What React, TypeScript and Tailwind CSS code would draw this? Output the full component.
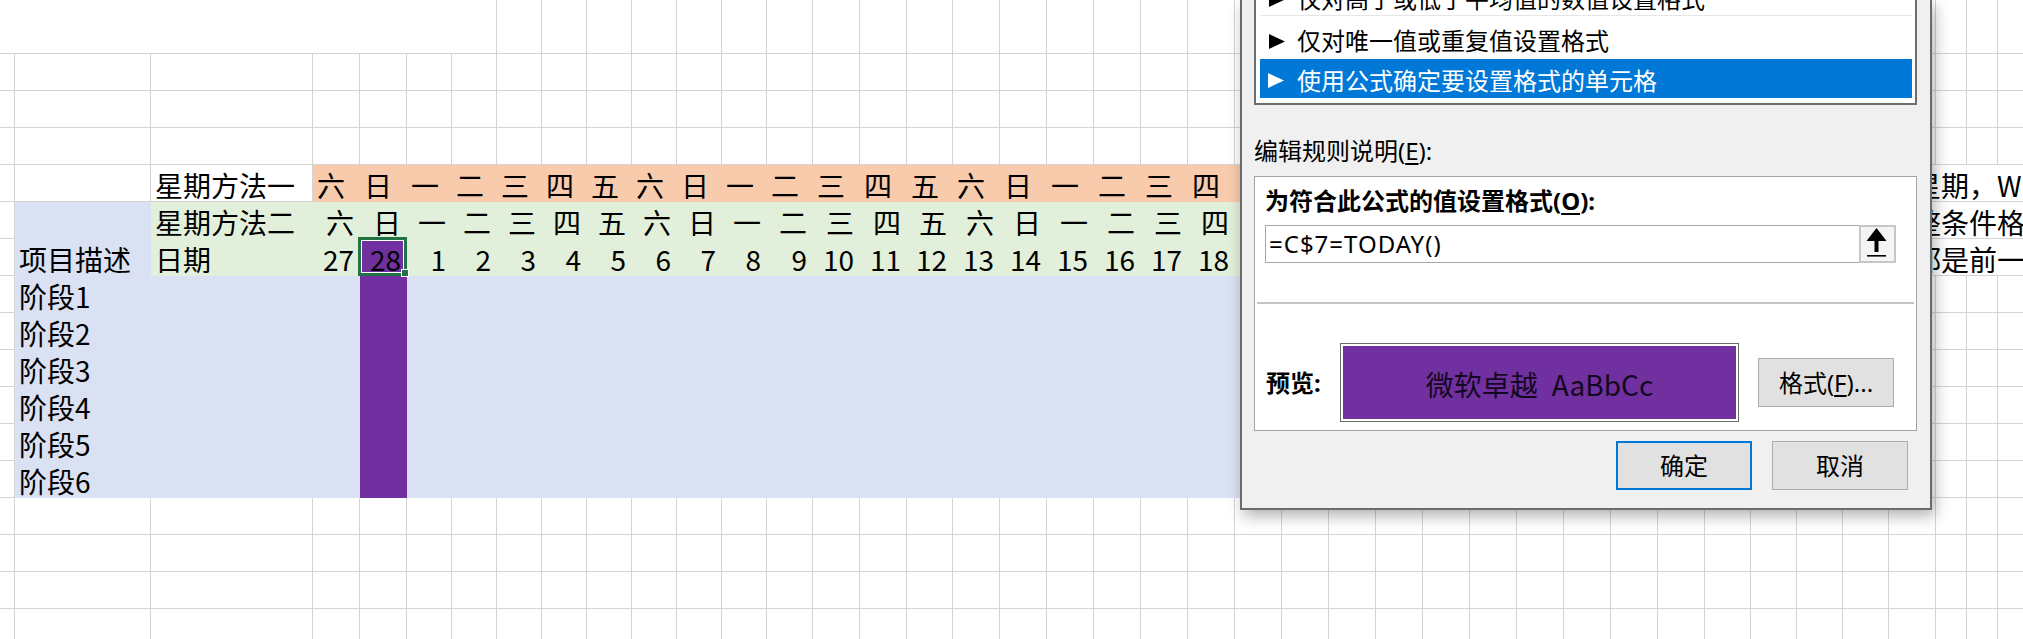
import React from "react";

const G =
  "grid grid-cols-[15px_136px_162px_47px_47px_repeat(8,45px)_46px_47px_47px_46px_repeat(16,47px)_repeat(4,46px)_47px_repeat(3,31px)]";

const plain = "h-[37px] border-r border-b border-[#d4d4d4]";
const orange = "h-[37px] border-r border-b border-transparent bg-[#f8cbad]";
const green = "h-[37px] border-r border-b border-transparent bg-[#e2efda]";
const lav = "h-[37px] border-r border-b border-transparent bg-[#d9e1f2]";
const purple = "h-[37px] border-r border-b border-transparent bg-[#7030a0]";
const txt = " flex items-center pt-[3px] whitespace-nowrap";
const L = " justify-start pl-[4px]";
const R = " justify-end pr-[5px]";
const over =
  "col-span-4 h-[37px] border-b border-[#d4d4d4] flex items-center pt-[3px] pl-[24px] whitespace-nowrap overflow-visible";

const days: number[] = [27, 28, ...Array.from({ length: 31 }, (_, i) => i + 1)];
const wk = ["六", "日", "一", "二", "三", "四", "五"];

function plainRow(key: string, n = 41) {
  return Array.from({ length: n }).map((_, i) => <div key={key + i} className={plain} />);
}

function Tri({ white }: { white?: boolean }) {
  return (
    <svg width="16" height="15" viewBox="0 0 16 15" className="shrink-0">
      <polygon points="0,0 16,7.5 0,15" fill={white ? "#ffffff" : "#000000"} />
    </svg>
  );
}

function Dialog() {
  return (
    <div className="absolute left-[1240px] top-0 w-[692px] h-[510px] bg-[#f0f0f0] border-x-2 border-b-2 border-[#6b6b6b] shadow-[3px_6px_14px_rgba(0,0,0,0.3)] font-['Noto_Sans','Noto_Sans_CJK_SC',sans-serif] text-[24px] text-black flex flex-col z-20">
      {/* rule type list */}
      <div className="ml-[12px] mr-[13px] -mt-[21px] border-2 border-[#6e6e6e] bg-white pl-[4px] pr-[3px] pt-[2px] pb-[5px]">
        <div className="h-[33px] border-b border-[#e6e6e6] flex items-center whitespace-nowrap">
          <span className="ml-[9px]"><Tri /></span>
          <span className="ml-[12px] leading-none">仅对高于或低于平均值的数值设置格式</span>
        </div>
        <div className="h-[43px] pt-[7px] flex items-center whitespace-nowrap">
          <span className="ml-[9px]"><Tri /></span>
          <span className="ml-[12px] leading-none">仅对唯一值或重复值设置格式</span>
        </div>
        <div className="h-[39px] pt-[4px] flex items-center whitespace-nowrap bg-[#0078d7] text-white">
          <span className="ml-[8px]"><Tri white /></span>
          <span className="ml-[13px] leading-none">使用公式确定要设置格式的单元格</span>
        </div>
      </div>

      <div className="mt-[30px] ml-[12px] h-[32px] leading-[32px] whitespace-nowrap">
        编辑规则说明(<span className="underline underline-offset-[3px]">E</span>):
      </div>

      {/* rule description panel */}
      <div className="mt-[9px] ml-[12px] mr-[13px] h-[255px] border border-[#a3a3a3] bg-white flex flex-col">
        <div className="mt-[8px] pl-[10px] h-[32px] leading-[32px] font-bold whitespace-nowrap">
          为符合此公式的值设置格式(<span className="underline underline-offset-[3px]">O</span>):
        </div>
        <div className="mt-[8px] ml-[10px] w-[631px] h-[38px] border border-[#a6a6a6] flex items-stretch">
          <div className="flex-1 flex items-center pl-[3px] leading-none tracking-[1px]">=C$7=TODAY()</div>
          <div className="-my-[1px] -mr-[1px] w-[37px] border-2 border-[#c6c6c6] bg-[#f4f4f4] flex items-center justify-center">
            <svg width="33" height="34" viewBox="0 0 33 34">
              <polygon
                points="15.5,1 25.5,14 17.5,14 17.5,25 13.5,25 13.5,14 5.5,14"
                fill="#000000"
              />
              <rect x="6" y="28" width="19" height="1.6" fill="#000000" />
            </svg>
          </div>
        </div>
        <div className="mt-[39px] mx-[2px] h-[2px] bg-[#c4c4c4]" />
        <div className="mt-[39px] flex items-center">
          <div className="w-[85px] pl-[11px] font-bold whitespace-nowrap">预览:</div>
          <div className="w-[399px] h-[79px] border border-[#6b6b6b] bg-white p-[2px]">
            <div className="w-full h-full bg-[#7030a0] flex items-center justify-center gap-[14px] font-['Noto_Sans_CJK_SC',sans-serif] text-[28px] text-[#14081f] whitespace-nowrap pt-[2px]">
              <span>微软卓越</span>
              <span>AaBbCc</span>
            </div>
          </div>
          <div className="ml-[19px] w-[136px] h-[49px] border border-[#adadad] bg-[#e1e1e1] flex items-center justify-center whitespace-nowrap">
            格式(<span className="underline underline-offset-[3px]">F</span>)...
          </div>
        </div>
      </div>

      {/* buttons */}
      <div className="mt-[10px] mr-[22px] flex justify-end gap-[20px]">
        <div className="w-[136px] h-[49px] border-2 border-[#0078d7] bg-[#e1e1e1] flex items-center justify-center">
          确定
        </div>
        <div className="w-[136px] h-[49px] border border-[#adadad] bg-[#e1e1e1] flex items-center justify-center">
          取消
        </div>
      </div>
    </div>
  );
}

export default function App() {
  return (
    <div className="relative w-[2023px] h-[639px] overflow-hidden bg-white">
      <div className={G + " font-['Noto_Sans_CJK_SC',sans-serif] text-[28px] text-black"}>
        {/* row 1 (tall title row, merged at left) */}
        <div className="col-span-7 h-[54px] border-r border-b border-[#d4d4d4]" />
        {Array.from({ length: 34 }).map((_, i) => (
          <div key={"r1" + i} className="h-[54px] border-r border-b border-[#d4d4d4]" />
        ))}
        {/* rows 2-4 */}
        {plainRow("r2")}
        {plainRow("r3")}
        {plainRow("r4")}

        {/* row 5 : 星期方法一 */}
        <div className={plain} />
        <div className={plain} />
        <div className={plain + txt + L}>星期方法一</div>
        {days.map((_, i) => (
          <div key={"w1" + i} className={orange + txt + L}>
            {wk[i % 7]}
          </div>
        ))}
        <div className={plain} />
        <div className={over}>星期，WEEKDAY函数</div>

        {/* row 6 : 星期方法二 */}
        <div className={plain} />
        <div className={lav} />
        <div className={green + txt + L}>星期方法二</div>
        {days.map((_, i) => (
          <div key={"w2" + i} className={green + txt + R}>
            {wk[i % 7]}
          </div>
        ))}
        <div className={plain} />
        <div className={over}>整条件格式</div>

        {/* row 7 : 日期 */}
        <div className={plain} />
        <div className={lav + txt + L}>项目描述</div>
        <div className={green + txt + L}>日期</div>
        {days.map((d, i) =>
          i === 1 ? (
            <div key={"d" + i} className={purple + txt + R + " relative"}>
              {d}
              <div className="absolute -left-[2px] -top-[2px] -right-[1px] -bottom-[1px] border-[3px] border-[#217346] z-10">
                <div className="w-full h-full border border-white" />
              </div>
              <div className="absolute -right-[3px] -bottom-[2px] w-[8px] h-[8px] bg-[#217346] border border-white z-10" />
            </div>
          ) : (
            <div key={"d" + i} className={green + txt + R}>
              {d}
            </div>
          )
        )}
        <div className={plain} />
        <div className={over}>都是前一天</div>

        {/* rows 8-13 : 阶段 */}
        {[1, 2, 3, 4, 5, 6].map((n) => (
          <React.Fragment key={"s" + n}>
            <div className={plain} />
            <div className={lav + txt + L}>阶段{n}</div>
            <div className={lav} />
            {days.map((_, i) => (
              <div key={"s" + n + "-" + i} className={i === 1 ? purple : lav} />
            ))}
            {plainRow("s" + n + "p", 5)}
          </React.Fragment>
        ))}

        {/* rows 14-17 */}
        {plainRow("r14")}
        {plainRow("r15")}
        {plainRow("r16")}
        {plainRow("r17")}
      </div>

      <Dialog />
    </div>
  );
}
